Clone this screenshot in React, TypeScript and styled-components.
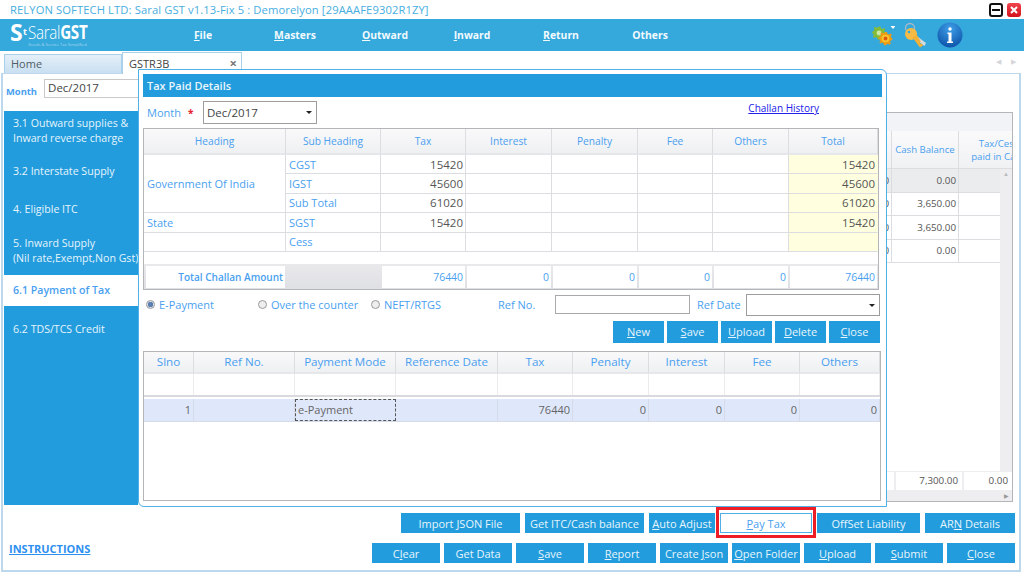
import React from "react";
import styled, { createGlobalStyle } from "styled-components";

const Global = createGlobalStyle`
  html, body { margin: 0; padding: 0; background: #fff; }
  * { box-sizing: border-box; }
  body { font-family: "Open Sans", "Noto Sans", sans-serif; font-size: 11px; color: #555; }
  u { text-underline-offset: 1px; }
`;

const BLUE = "#229cdc";
const TEXT = "#4a9ff0";
const LINE = "#dcdde0";

const Page = styled.div`
  width: 1024px; height: 576px; position: relative; overflow: hidden; background: #fff;
  display: flex; flex-direction: column;
`;
const TitleBar = styled.div`
  height: 19px; display: flex; align-items: center; padding: 0 3px 0 10px; justify-content: space-between;
`;
const TitleText = styled.span`
  color: #47aee0; font-size: 11.2px; letter-spacing: 0.01em; white-space: nowrap;
`;
const WinControls = styled.div`display: flex; gap: 4px; align-items: center;`;
const WinBtn = styled.div<{ $close?: boolean }>`
  width: 14px; height: 14px; border-radius: 3px; position: relative;
  display: flex; align-items: center; justify-content: center;
  background: ${p => (p.$close ? "linear-gradient(#f0444c,#d3121c)" : "#fff")};
  border: ${p => (p.$close ? "none" : "2px solid #111")};
`;
const NavBar = styled.div`
  height: 32px; background: #35a8dc; display: flex; align-items: center; color: #fff;
`;
const Logo = styled.div`
  width: 158px; padding-left: 10px; display: flex; flex-direction: column; height: 32px; padding-top: 3px; position: relative;
`;
const LogoRow = styled.div`display: flex; align-items: center; height: 20px; line-height: 20px; color: #fff;`;
const LogoS = styled.b`font-size: 23px; width: 13px; line-height: 20px;`;
const LogoT = styled.span`font-size: 9px; font-weight: 700; width: 5px; margin-top: -1px;`;
const LogoName = styled.span`
  font-size: 19px; font-weight: 300; letter-spacing: -0.4px; transform: scaleX(0.8); transform-origin: left center; white-space: nowrap;
  & b { font-weight: 700; }
`;
const LogoTag = styled.span`
  position: absolute; left: 28px; top: 23px; font-size: 4.1px; line-height: 5px; white-space: nowrap; color: rgba(255,255,255,.55);
`;
const NavItem = styled.div<{ $w: number }>`
  width: ${p => p.$w}px; text-align: center; font-weight: 700; font-size: 10.4px; color: #f2fafe;
`;
const NavIcons = styled.div`
  margin-left: auto; padding-right: 61px; display: flex; align-items: center; gap: 8px;
`;
const TabStrip = styled.div`
  height: 22px; display: flex; align-items: flex-end; padding-left: 4px; position: relative;
`;
const HomeTab = styled.div`
  width: 118px; height: 19px; background: linear-gradient(#e4eff8,#c9e0f1); border: 1px solid #a9d1ec; border-bottom: none;
  padding-left: 6px; line-height: 18px; color: #505c66; font-size: 11px;
`;
const ActiveTab = styled.div`
  width: 120px; height: 22px; background: #fff; border: 1px solid #a9d1ec; border-bottom: none; padding-left: 6px;
  line-height: 22px; color: #444; font-size: 11px; display: flex; justify-content: space-between; padding-right: 4px;
  margin-bottom: -1px; position: relative; z-index: 1;
`;
const TabClose = styled.span`color: #777; font-weight: 700; font-size: 13px; line-height: 21px;`;
const TabArrows = styled.div`
  position: absolute; right: 8px; top: 6px; display: flex; gap: 10px; color: #d4d6d9; font-size: 7px;
`;
const Win = styled.div`
  margin: 0 3px 0 1px; height: 499px; border: 2px solid #bcd8ec; border-top-width: 1px; padding: 0 5px 0 1px;
  display: flex; flex-direction: column;
`;
const MonthRow = styled.div`height: 37px; display: flex; align-items: center; padding: 0 0 4px 2px; gap: 7px;`;
const MonthLabel = styled.b`color: ${TEXT}; font-size: 9.4px; margin-top: 2px;`;
const MonthInput = styled.div`
  width: 120px; height: 19px; border: 1px solid #c9c9c9; padding-left: 3px; line-height: 16px; color: #444; font-size: 11.5px; margin-top: -4px;
`;
const Body = styled.div`display: flex; height: 394px;`;
const Side = styled.div`width: 134px; background: ${BLUE}; flex: none; display: flex; flex-direction: column;`;
const SideItem = styled.div<{ $h: number; $active?: boolean }>`
  height: ${p => p.$h}px; flex: none; display: flex; align-items: center; padding-left: 9px;
  font-size: 10.6px; line-height: 15px; white-space: nowrap; overflow: hidden;
  background: ${p => (p.$active ? "#fff" : "transparent")};
  color: ${p => (p.$active ? TEXT : "#e6f4fc")};
  font-weight: ${p => (p.$active ? 600 : 400)};
`;
const Panel = styled.div`
  margin-left: 1px; width: 874px; height: 390px; border: 1px solid #b4b5b9; position: relative; overflow: hidden;
  display: flex; flex-direction: column; margin-top: 1px;
`;
const Band = styled.div`height: 18px; background: #f2f3f6; flex: none;`;
const BgRow = styled.div<{ $h: number; $gray?: boolean }>`
  display: grid; grid-template-columns: 752px 67px 80px; height: ${p => p.$h}px; flex: none;
  background: ${p => (p.$gray ? "#ebecee" : "#fff")}; border-bottom: 1px solid ${LINE};
`;
const BgHead = styled.div`
  display: flex; align-items: center; justify-content: center; text-align: center; color: ${TEXT}; font-size: 9.6px; line-height: 13px;
  background: linear-gradient(#fafafb,#f0f1f3); border-right: 1px solid ${LINE}; white-space: nowrap;
`;
const BgCell = styled.div`
  text-align: right; padding-right: 2px; font-size: 9.8px; color: #555; border-right: 1px solid ${LINE};
  display: flex; align-items: center; justify-content: flex-end;
`;
const Spring = styled.div`flex: 1;`;
const BgTotals = styled.div`
  height: 20px; background: #eeeef0; display: grid; grid-template-columns: 754px 66px 48px; column-gap: 2px; padding-top: 1px; flex: none;
`;
const BgTotal = styled.div`
  background: #fff; font-size: 9.8px; text-align: right; padding-right: 4px; line-height: 17px; color: #555; margin-bottom: 1px;
`;
const HScroll = styled.div`
  height: 10px; background: #eeeef0; flex: none; text-align: right; font-size: 6px; color: #999; line-height: 10px; padding-right: 3px;
`;
const VScroll = styled.div`
  position: absolute; right: 0; top: 56px; bottom: 30px; width: 12px; background: #eeeef0; text-align: center; color: #bbb; font-size: 6px; line-height: 10px;
`;
const BottomBar = styled.div`position: relative; flex: 1; display: flex; flex-direction: column; gap: 10px; padding-top: 8px; align-items: flex-end;`;
const BtnRow = styled.div<{ $gap: number }>`display: flex; gap: ${p => p.$gap}px; margin-right: -1px;`;
const Btn = styled.div<{ $w: number }>`
  width: ${p => p.$w}px; height: 20px; background: ${BLUE}; color: #e8f5fd; font-size: 11px; display: flex; align-items: center; justify-content: center;
  white-space: nowrap; font-weight: 500;
`;
const PayBtn = styled.div`
  width: 92px; height: 20px; background: #fff; color: ${TEXT}; font-size: 11px; display: flex; align-items: center; justify-content: center;
  position: relative; border: 1px solid #52aee6; font-weight: 500;
  &::after { content: ""; position: absolute; inset: -7px -5px -6px -5px; border: 3px solid #ee1c25; pointer-events: none; }
`;
const Instructions = styled.a`
  position: absolute; left: 5px; top: 36px; color: #2d8ff0; font-weight: 700; font-size: 11px; text-decoration: underline;
`;

const Modal = styled.div`
  position: absolute; left: 138px; top: 69px; width: 749px; height: 438px; background: #fff; z-index: 2;
  border: 1px solid #50b0e8; border-radius: 0 6px 0 6px; padding: 4px 4px 0 4px; display: flex; flex-direction: column;
`;
const ModalTitle = styled.div`
  height: 23px; background: ${BLUE}; color: #e9f6fd; font-size: 11px; font-weight: 600; line-height: 23px; padding-left: 4px; flex: none;
`;
const ModalMonth = styled.div`height: 31px; display: flex; align-items: center; padding-left: 4px; position: relative; flex: none;`;
const ModalMonthLabel = styled.span`color: ${TEXT}; font-size: 11px; width: 41px;`;
const Req = styled.span`color: #e5232b; font-weight: 700; font-size: 10px; width: 15px;`;
const Select = styled.div<{ $w: number; $h: number }>`
  width: ${p => p.$w}px; height: ${p => p.$h}px; border: 1px solid #9d9d9d; padding-left: 3px; color: #444; font-size: 11.5px;
  display: flex; align-items: center; justify-content: space-between; padding-right: 4px; flex: none;
`;
const Caret = styled.span`width: 0; height: 0; border: 3px solid transparent; border-top: 3px solid #222; border-bottom: none;`;
const HistoryLink = styled.a`
  position: absolute; right: 63px; top: 4px; color: #2020e8; font-size: 10px; text-decoration: underline; white-space: nowrap;
`;

const TOP_COLS = "142px 95px 85px 86px 86px 75px 76px 1fr";
const LOW_COLS = "50px 101px 101px 102px 75px 76px 76px 75px 1fr";

const TopTable = styled.div`width: 736px; border: 1px solid #b4b5b9; flex: none;`;
const TopGrid = styled.div`
  display: grid; grid-template-columns: ${TOP_COLS}; grid-template-rows: 26px repeat(5, 19.4px);
`;
const Head = styled.div`
  display: flex; align-items: center; justify-content: center; color: ${TEXT}; font-size: 10.2px;
  background: linear-gradient(#f9f9fa,#eff0f2); border-right: 1px solid ${LINE}; border-bottom: 2px solid #e6e7ea; white-space: nowrap;
`;
const TitleCell = styled.div<{ $span?: number }>`
  grid-row: span ${p => p.$span ?? 1}; display: flex; align-items: center; padding-left: 3px; color: ${TEXT}; font-size: 11px;
  border-right: 1px solid ${LINE}; border-bottom: 1px solid ${LINE}; white-space: nowrap;
`;
const NumCell = styled.div<{ $total?: boolean }>`
  display: flex; align-items: center; justify-content: flex-end; padding-right: 2px; font-size: 11.5px; color: #555;
  background: ${p => (p.$total ? "#ffffe0" : "#fff")};
  border-right: 1px solid ${p => (p.$total ? "transparent" : LINE)}; border-bottom: 1px solid ${LINE};
`;
const Gap = styled.div`height: 12px;`;
const TotalGrid = styled.div`
  display: grid; grid-template-columns: ${TOP_COLS}; height: 25px; background: linear-gradient(#e9e9ec,#dfe0e4);
`;
const TotalCell = styled.div<{ $plain?: boolean }>`
  margin: 2px 1px 1px 1px; background: ${p => (p.$plain ? "transparent" : "#fff")}; color: ${TEXT}; font-size: 10.4px;
  display: flex; align-items: center; justify-content: flex-end; padding-right: 2px; white-space: nowrap; font-weight: 500;
  &:first-child { margin-left: 2px; font-weight: 600; font-size: 10px; }
`;
const RadioRow = styled.div`height: 31px; display: flex; align-items: center; flex: none; padding-left: 3px;`;
const RadioItem = styled.div<{ $w: number }>`
  width: ${p => p.$w}px; display: flex; align-items: center; gap: 4px; color: ${TEXT}; font-size: 11px; flex: none; white-space: nowrap; margin-top: -2px;
`;
const RadioDot = styled.span<{ $on?: boolean }>`
  width: 9px; height: 9px; border-radius: 50%; flex: none; border: 1px solid #9a9a9a;
  background: ${p => (p.$on ? "radial-gradient(circle,#5a7fb0 0 2.5px,#dfe3ea 3px)" : "#eee")};
`;
const FieldLabel = styled.span<{ $w: number }>`width: ${p => p.$w}px; color: ${TEXT}; font-size: 11px; flex: none; white-space: nowrap; margin-top: -2px;`;
const TextInput = styled.div`width: 135px; height: 19px; border: 1px solid #a9a9a9; margin: -2px 7px 0 0; flex: none;`;
const ModalBtns = styled.div`display: flex; gap: 3px; justify-content: flex-end; padding-right: 2px; height: 22px; flex: none;`;
const ModalBtn = styled.div`
  width: 51px; height: 22px; background: ${BLUE}; color: #e8f5fd; font-size: 11px; display: flex; align-items: center; justify-content: center; font-weight: 500;
`;
const LowTable = styled.div`
  margin-top: 8px; width: 738px; height: 150px; border: 1px solid #b4b5b9; flex: none; display: flex; flex-direction: column;
`;
const LowHead = styled.div`display: grid; grid-template-columns: ${LOW_COLS}; height: 22px;`;
const LowHeadCell = styled(Head)`font-size: 11.6px;`;
const LowEmpty = styled.div`display: grid; grid-template-columns: ${LOW_COLS}; height: 23px; border-bottom: 2px solid #d9d9de;`;
const LowEmptyCell = styled.div`border-right: 1px solid #ececef;`;
const LowRow = styled.div`
  display: grid; grid-template-columns: ${LOW_COLS}; height: 23px; margin-top: 2px; background: #dfe8fb; border-bottom: 1px solid #d5dbe8;
`;
const LowCell = styled.div<{ $focus?: boolean }>`
  display: flex; align-items: center; justify-content: ${p => (p.$focus ? "flex-start" : "flex-end")}; padding: 0 2px;
  font-size: 11px; color: #666; border-right: 1px solid #d5dbe8;
  border: ${p => (p.$focus ? "1px dashed #555" : undefined)};
`;

const GEAR = "M0 -6.500 L1.500 -6.500 L2 -4.600 L3.600 -3.900 L5.200 -4.900 L6.300 -3.700 L5.200 -2.100 L5.800 -0.700 L7 0 L6.500 1.600 L5 2.200 L4.600 3.600 L5.300 5 L4 6.200 L2.400 5.300 L1 5.900 L0 7 L-1.500 6.500 L-2 4.800 L-3.500 4.100 L-5 5 L-6.200 3.800 L-5.200 2.300 L-5.800 0.800 L-7 0 L-6.500 -1.500 L-5 -2.200 L-4.500 -3.700 L-5.200 -5 L-4 -6.200 L-2.400 -5.200 L-1 -5.800 Z";
const Gears = () => (
  <svg width="23" height="24" viewBox="0 0 23 24">
    <g transform="translate(7 10)">
      <path d={GEAR} fill="#84bc3a" />
      <circle r="2.400" fill="#cfe9a4" />
    </g>
    <g transform="translate(13.500 15.500)">
      <path d={GEAR} fill="#ee9a12" />
      <circle r="3.800" fill="#f7c62f" />
      <circle r="1.900" fill="#e0550f" />
    </g>
    <path d="M18.500 3h5l-2.500 3z" fill="#fff" />
  </svg>
);
const Keys = () => (
  <svg width="24" height="26" viewBox="0 0 24 26">
    <circle cx="7" cy="6" r="4.500" fill="none" stroke="#a9b9c6" strokeWidth="1.300" />
    <path d="M11 12l12 9-1.500 3L9 15z" fill="#d6dbde" />
    <circle cx="8" cy="12" r="6" fill="#f6bb45" />
    <path d="M9.500 15.500l7.500 10 3-2-1.200-2-1.500.6-.6-1.600 1.100-1-4.300-7z" fill="#f3b136" />
    <circle cx="6" cy="10" r="1.300" fill="#35a8dc" />
  </svg>
);
const InfoIcon = () => (
  <svg width="28" height="26" viewBox="0 0 28 26">
    <defs>
      <radialGradient id="ig" cx="50%" cy="25%" r="80%">
        <stop offset="0" stopColor="#3f9fe8" />
        <stop offset="1" stopColor="#0a4fa6" />
      </radialGradient>
    </defs>
    <circle cx="15" cy="13" r="12.500" fill="url(#ig)" />
    <circle cx="15" cy="7" r="1.700" fill="#fff" />
    <path d="M12.500 10.500h4v9h1.500v1.500h-6v-1.500h1.500v-7.500h-1z" fill="#fff" />
  </svg>
);

const NAV: [string, string, number][] = [["F", "ile", 90], ["M", "asters", 94], ["O", "utward", 86], ["I", "nward", 88], ["R", "eturn", 90], ["", "Others", 88]];
const SIDE: { h: number; lines: string[]; active?: boolean }[] = [
  { h: 39, lines: ["3.1 Outward supplies &", "Inward reverse charge"] },
  { h: 42, lines: ["3.2 Interstate Supply"] },
  { h: 34, lines: ["4. Eligible ITC"] },
  { h: 49, lines: ["5. Inward Supply", "(Nil rate,Exempt,Non Gst)"] },
  { h: 31, lines: ["6.1 Payment of Tax"], active: true },
  { h: 46, lines: ["6.2 TDS/TCS Credit"] },
];
const TOP_HEADS = ["Heading", "Sub Heading", "Tax", "Interest", "Penalty", "Fee", "Others", "Total"];
const TOP_ROWS: [string, string][] = [["CGST", "15420"], ["IGST", "45600"], ["Sub Total", "61020"], ["SGST", "15420"], ["Cess", ""]];
const LOW_HEADS = ["Slno", "Ref No.", "Payment Mode", "Reference Date", "Tax", "Penalty", "Interest", "Fee", "Others"];

export default function App() {
  const row = (i: number) => {
    const [sub, val] = TOP_ROWS[i];
    return (
      <React.Fragment key={sub}>
        <TitleCell>{sub}</TitleCell>
        <NumCell>{val}</NumCell>
        <NumCell /><NumCell /><NumCell /><NumCell />
        <NumCell $total>{val}</NumCell>
      </React.Fragment>
    );
  };
  return (
    <Page>
      <Global />
      <TitleBar>
        <TitleText>RELYON SOFTECH LTD: Saral GST v1.13-Fix 5 : Demorelyon [29AAAFE9302R1ZY]</TitleText>
        <WinControls>
          <WinBtn>
            <svg width="8" height="2" viewBox="0 0 8 2"><rect width="8" height="2" fill="#111" /></svg>
          </WinBtn>
          <WinBtn $close>
            <svg width="8" height="8" viewBox="0 0 8 8"><path d="M1 1l6 6M7 1L1 7" stroke="#fff" strokeWidth="2" /></svg>
          </WinBtn>
        </WinControls>
      </TitleBar>
      <NavBar>
        <Logo>
          <LogoRow>
            <LogoS>S</LogoS><LogoT>t</LogoT>
            <LogoName>Saral<b>GST</b></LogoName>
          </LogoRow>
          <LogoTag>Goods &amp; Service Tax Simplified</LogoTag>
        </Logo>
        {NAV.map(([k, r, w]) => (
          <NavItem key={k + r} $w={w}><u>{k}</u>{r}</NavItem>
        ))}
        <NavIcons><Gears /><Keys /><InfoIcon /></NavIcons>
      </NavBar>
      <TabStrip>
        <HomeTab>Home</HomeTab>
        <ActiveTab>GSTR3B<TabClose>×</TabClose></ActiveTab>
        <TabArrows><span>◀</span><span>▶</span></TabArrows>
      </TabStrip>
      <Win>
        <MonthRow>
          <MonthLabel>Month</MonthLabel>
          <MonthInput>Dec/2017</MonthInput>
        </MonthRow>
        <Body>
          <Side>
            {SIDE.map(s => (
              <SideItem key={s.lines[0]} $h={s.h} $active={s.active}>
                <span>{s.lines.map((l, i) => <React.Fragment key={l}>{i > 0 && <br />}{l}</React.Fragment>)}</span>
              </SideItem>
            ))}
          </Side>
          <Panel>
            <Band />
            <BgRow $h={38}>
              <BgHead />
              <BgHead>Cash Balance</BgHead>
              <BgHead>Tax/Cess<br />paid in Cash</BgHead>
            </BgRow>
            {["0.00", "3,650.00", "3,650.00", "0.00"].map((v, i) => (
              <BgRow key={i} $h={23.5} $gray={i === 0}>
                <BgCell>0</BgCell>
                <BgCell>{v}</BgCell>
                <BgCell />
              </BgRow>
            ))}
            <Spring />
            <BgTotals>
              <BgTotal />
              <BgTotal>7,300.00</BgTotal>
              <BgTotal>0.00</BgTotal>
            </BgTotals>
            <HScroll>▶</HScroll>
            <VScroll>▲</VScroll>
          </Panel>
        </Body>
        <BottomBar>
          <Instructions>INSTRUCTIONS</Instructions>
          <BtnRow $gap={5}>
            <Btn $w={119}>Import JSON File</Btn>
            <Btn $w={119}>Get ITC/Cash balance</Btn>
            <Btn $w={66}><span><u>A</u>uto Adjust</span></Btn>
            <PayBtn><span><u>P</u>ay Tax</span></PayBtn>
            <Btn $w={103}>OffSet Liability</Btn>
            <Btn $w={90}><span>AR<u>N</u> Details</span></Btn>
          </BtnRow>
          <BtnRow $gap={4}>
            <Btn $w={68}><span>C<u>l</u>ear</span></Btn>
            <Btn $w={68}>Get Data</Btn>
            <Btn $w={68}><span><u>S</u>ave</span></Btn>
            <Btn $w={68}><span><u>R</u>eport</span></Btn>
            <Btn $w={68}><span>Create <u>J</u>son</span></Btn>
            <Btn $w={68}><span><u>O</u>pen Folder</span></Btn>
            <Btn $w={67}><span><u>U</u>pload</span></Btn>
            <Btn $w={68}><span><u>S</u>ubmit</span></Btn>
            <Btn $w={68}><span><u>C</u>lose</span></Btn>
          </BtnRow>
        </BottomBar>
      </Win>

      <Modal>
        <ModalTitle>Tax Paid Details</ModalTitle>
        <ModalMonth>
          <ModalMonthLabel>Month</ModalMonthLabel>
          <Req>*</Req>
          <Select $w={114} $h={23}>Dec/2017<Caret /></Select>
          <HistoryLink>Challan History</HistoryLink>
        </ModalMonth>
        <TopTable>
          <TopGrid>
            {TOP_HEADS.map(h => <Head key={h}>{h}</Head>)}
            <TitleCell $span={3}>Government Of India</TitleCell>
            {row(0)}{row(1)}{row(2)}
            <TitleCell>State</TitleCell>
            {row(3)}
            <TitleCell />
            {row(4)}
          </TopGrid>
          <Gap />
          <TotalGrid>
            <TotalCell>Total Challan Amount</TotalCell>
            <TotalCell $plain />
            <TotalCell>76440</TotalCell>
            <TotalCell>0</TotalCell>
            <TotalCell>0</TotalCell>
            <TotalCell>0</TotalCell>
            <TotalCell>0</TotalCell>
            <TotalCell>76440</TotalCell>
          </TotalGrid>
        </TopTable>
        <RadioRow>
          <RadioItem $w={112}><RadioDot $on />E-Payment</RadioItem>
          <RadioItem $w={113}><RadioDot />Over the counter</RadioItem>
          <RadioItem $w={127}><RadioDot />NEFT/RTGS</RadioItem>
          <FieldLabel $w={57}>Ref No.</FieldLabel>
          <TextInput />
          <FieldLabel $w={49}>Ref Date</FieldLabel>
          <Select $w={134} $h={22}><span /><Caret /></Select>
        </RadioRow>
        <ModalBtns>
          <ModalBtn><span><u>N</u>ew</span></ModalBtn>
          <ModalBtn><span><u>S</u>ave</span></ModalBtn>
          <ModalBtn><span><u>U</u>pload</span></ModalBtn>
          <ModalBtn><span><u>D</u>elete</span></ModalBtn>
          <ModalBtn><span><u>C</u>lose</span></ModalBtn>
        </ModalBtns>
        <LowTable>
          <LowHead>{LOW_HEADS.map(h => <LowHeadCell key={h}>{h}</LowHeadCell>)}</LowHead>
          <LowEmpty>{LOW_HEADS.map(h => <LowEmptyCell key={h} />)}</LowEmpty>
          <LowRow>
            <LowCell>1</LowCell>
            <LowCell />
            <LowCell $focus>e-Payment</LowCell>
            <LowCell />
            <LowCell>76440</LowCell>
            <LowCell>0</LowCell>
            <LowCell>0</LowCell>
            <LowCell>0</LowCell>
            <LowCell>0</LowCell>
          </LowRow>
        </LowTable>
      </Modal>
    </Page>
  );
}
